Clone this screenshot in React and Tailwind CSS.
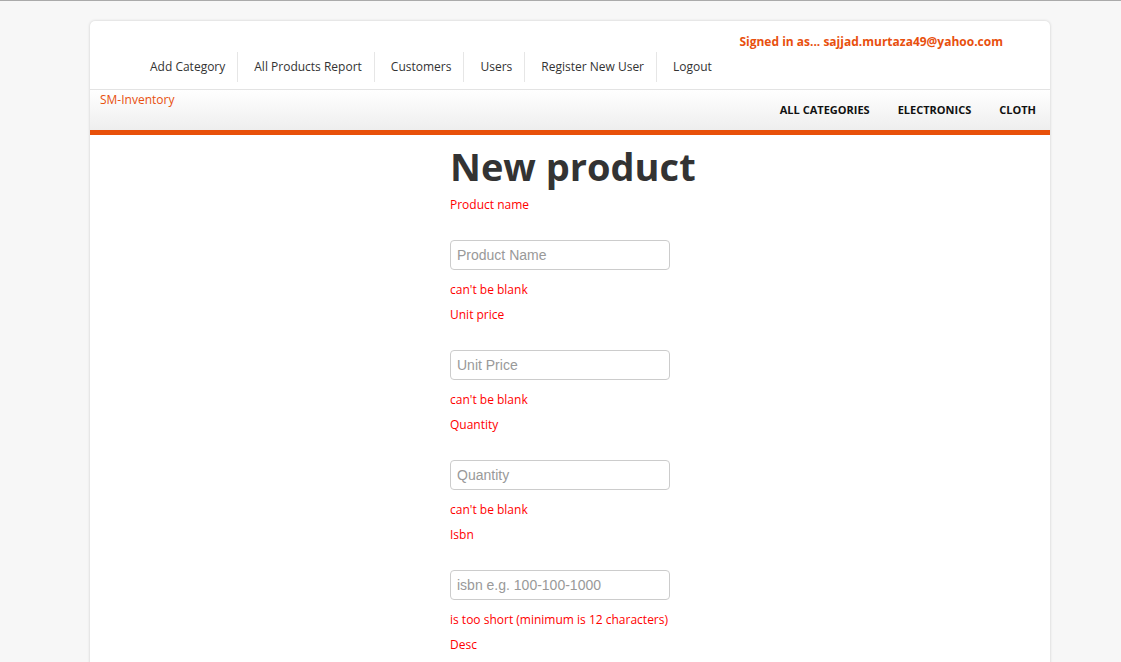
import React from 'react';

const navLinks = ['Add Category', 'All Products Report', 'Customers', 'Users', 'Register New User', 'Logout'];
const categories = ['ALL CATEGORIES', 'ELECTRONICS', 'CLOTH'];

const fields = [
    { label: 'Product name', placeholder: 'Product Name', error: "can't be blank" },
    { label: 'Unit price', placeholder: 'Unit Price', error: "can't be blank" },
    { label: 'Quantity', placeholder: 'Quantity', error: "can't be blank" },
    { label: 'Isbn', placeholder: 'isbn e.g. 100-100-1000', error: 'is too short (minimum is 12 characters)' },
];

const Field = ({ label, placeholder, error }) => (
    <div>
        <label className="block pt-[1px] text-[12px] leading-[18px] text-[#f00]">{label}</label>
        <input
            type="text"
            placeholder={placeholder}
            className="mt-[26px] block h-[30px] w-[220px] rounded-[4px] border border-[#ccc] bg-white px-[6px] font-['Liberation_Sans',Arial,sans-serif] text-[14px] text-[#555] placeholder:text-[#999] outline-none"
        />
        {error && (
            <div className="mt-[11px] mb-[6px] text-[12px] leading-[18px] text-[#f00]">{error}</div>
        )}
    </div>
);

export default function App() {
    return (
        <div className="min-h-screen border-t border-[#aaa] bg-[#f7f7f7] pt-[20px] font-['Open_Sans',sans-serif]">
            <div className="ml-[90px] w-[960px] min-h-[700px] rounded-t-[5px] bg-white shadow-[0_0_3px_rgba(0,0,0,0.18)]">
                {/* Top bar */}
                <div className="pt-[12px] pb-[7px]">
                    <div className="mb-[1px] flex justify-end pr-[47px] text-[12px] font-bold leading-[18px] text-[#e8500e]">
                        Signed in as... sajjad.murtaza49@yahoo.com
                    </div>
                    <ul className="flex h-[30px] pl-[60px] text-[12px] text-[#333]">
                        {navLinks.map((link, i) => (
                            <li
                                key={link}
                                className={`flex items-center pr-3 ${i === 0 ? '' : 'border-l border-[#e6e6e6] pl-[16px]'}`}
                            >
                                {link}
                            </li>
                        ))}
                    </ul>
                </div>

                {/* Brand + categories */}
                <div className="flex h-[41px] justify-between border-t border-[#e3e3e3] bg-gradient-to-b from-white to-[#eeeeee] pl-[10px] pr-[14px]">
                    <div className="pt-[1px] text-[12px] leading-[18px] text-[#e8500e]">SM-Inventory</div>
                    <ul className="flex gap-[28px] pt-[11px] text-[11px] font-bold leading-[18px] text-[#111]">
                        {categories.map((c) => (
                            <li key={c}>{c}</li>
                        ))}
                    </ul>
                </div>
                <div className="h-[5px] bg-[#e8500a]" />

                {/* Form */}
                <div className="pl-[360px] pt-[7px] pb-10">
                    <h1 className="text-[38px] font-bold leading-[48px] text-[#333]">New product</h1>
                    <form className="mt-[5px]">
                        {fields.map((f) => (
                            <Field key={f.label} {...f} />
                        ))}
                        <label className="block pt-[1px] text-[12px] leading-[18px] text-[#f00]">Desc</label>
                        <textarea
                            placeholder="Description"
                            className="mt-[26px] block h-[80px] w-[220px] rounded-[4px] border border-[#ccc] px-[6px] py-1 font-['Liberation_Sans',Arial,sans-serif] text-[14px] placeholder:text-[#999] outline-none"
                        />
                        <button
                            type="button"
                            className="mt-4 rounded-[4px] border border-[#ccc] bg-[#f5f5f5] px-3 py-1 text-[12px] text-[#333]"
                        >
                            Create Product
                        </button>
                    </form>
                </div>
            </div>
        </div>
    );
}
